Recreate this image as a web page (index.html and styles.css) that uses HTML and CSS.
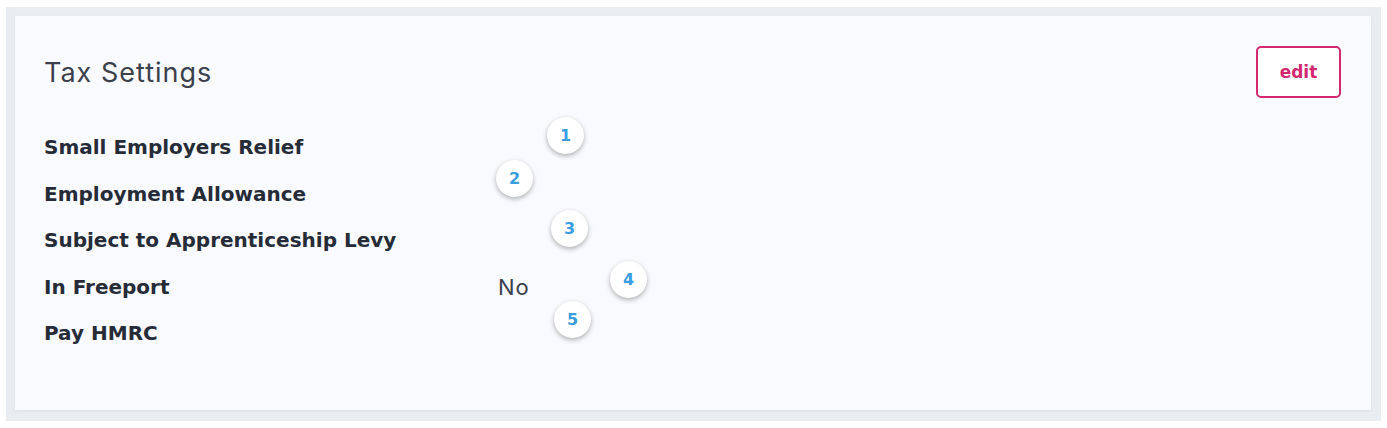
FILE: index.html
```html
<!DOCTYPE html>
<html>
<head>
<meta charset="utf-8">
<link rel="stylesheet" href="styles.css">
</head>
<body>
<div class="frame">
  <div class="card">
    <div class="header">
      <h2 class="title">Tax Settings</h2>
      <button class="edit">edit</button>
    </div>
    <div class="rows">
      <div class="row"><span class="label">Small Employers Relief</span><span class="value"></span></div>
      <div class="row"><span class="label">Employment Allowance</span><span class="value"></span></div>
      <div class="row"><span class="label">Subject to Apprenticeship Levy</span><span class="value"></span></div>
      <div class="row"><span class="label">In Freeport</span><span class="value">No</span></div>
      <div class="row"><span class="label">Pay HMRC</span><span class="value"></span></div>
    </div>
    <span class="badge b1">1</span>
    <span class="badge b2">2</span>
    <span class="badge b3">3</span>
    <span class="badge b4">4</span>
    <span class="badge b5">5</span>
  </div>
</div>
</body>
</html>
```
FILE: styles.css
```css
html, body { margin: 0; padding: 0; background: #ffffff; }
body { font-family: "DejaVu Sans", Inter, sans-serif; color: #2b3040; }
.frame {
  margin: 7px 6px 7px 6px;
  padding: 9px 10px 11px 9px;
  background: #e9edf2;
}
.card {
  position: relative;
  background: #f8fafd;
  height: 394px;
  box-sizing: border-box;
  padding: 30px 30px 0 29px;
  box-shadow: 0 1px 3px rgba(0,0,0,0.06);
}
.header { display: flex; justify-content: space-between; align-items: center; height: 52px; }
.title { margin: 0; font-weight: 400; font-size: 27px; color: #3b404c; font-family: Inter, sans-serif; letter-spacing: 1px; }
.edit {
  width: 85px; height: 52px;
  border: 2px solid #d3276f; border-radius: 5px;
  background: #ffffff; color: #d3276f;
  font-family: "DejaVu Sans", sans-serif; font-weight: 700; font-size: 17px;
  padding: 0;
  cursor: pointer;
}
.rows { margin-top: 26px; display: flex; flex-direction: column; }
.row { display: flex; align-items: center; height: 46.5px; }
.label { width: 454px; font-weight: 700; font-size: 20px; color: #262b38; }
.value { font-size: 22px; color: #3b404c; font-family: Inter, sans-serif; letter-spacing: 0.8px; }
.badge {
  position: absolute;
  width: 37px; height: 37px; border-radius: 50%;
  background: #ffffff;
  box-shadow: 0 2px 5px rgba(0,0,0,0.3);
  color: #3a9de0; font-weight: 700; font-size: 16px;
  display: flex; align-items: center; justify-content: center;
}
.b1 { left: 532px; top: 101px; }
.b2 { left: 481px; top: 144px; }
.b3 { left: 536px; top: 194px; }
.b4 { left: 595px; top: 245px; }
.b5 { left: 539px; top: 285px; }
```
